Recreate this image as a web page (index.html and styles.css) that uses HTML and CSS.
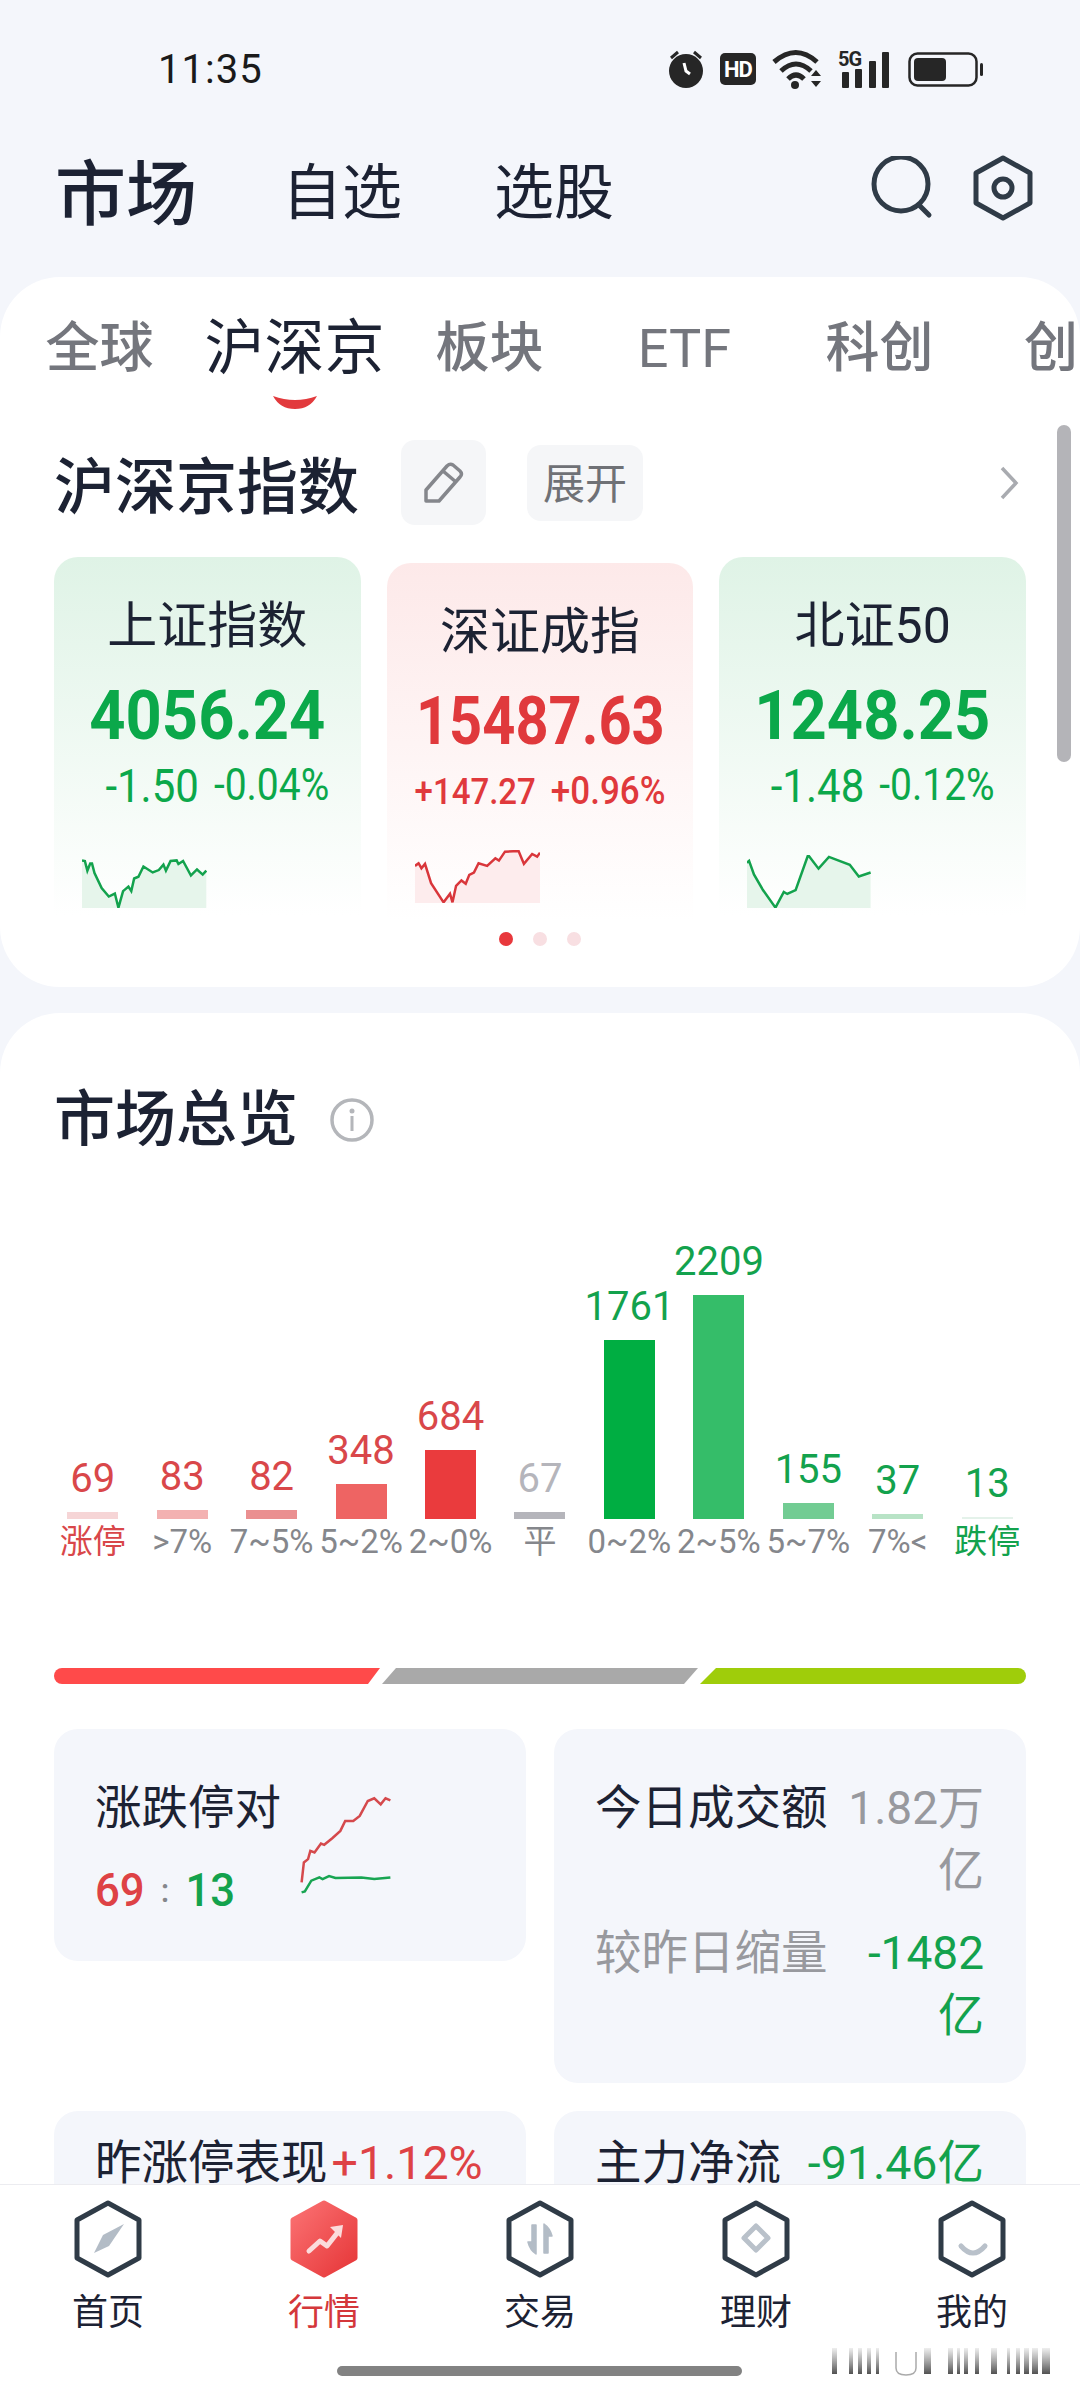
FILE: index.html
```html
<!DOCTYPE html>
<html lang="zh-CN">
<head>
    <meta charset="UTF-8">
    <meta name="viewport" content="width=device-width, initial-scale=1.0">
    <title>市场</title>
    <link rel="stylesheet" href="styles.css">
</head>
<body>
    <div class="phone">
        <div class="scroll">
            <div class="status-bar">
                <span class="time">11:35</span>
                <div class="status-icons">
                    <svg width="36" height="38" viewBox="0 0 36 38"><circle cx="18" cy="21" r="17" fill="#262626"/><path d="M3 8l7-6M33 8l-7-6" stroke="#262626" stroke-width="3"/><path d="M16 13l2 8 4 3" fill="none" stroke="#fff" stroke-width="3"/></svg>
                    <svg width="36" height="32" viewBox="0 0 36 32"><rect width="36" height="32" rx="5" fill="#262626"/><text x="18" y="24" class="status-text" text-anchor="middle" font-size="22" fill="#fff">HD</text></svg>
                    <svg width="50" height="40" viewBox="0 0 50 40"><path d="M2 13Q24-6 45 13M9 22Q24 8 39 22M16 30Q24 22 32 30" fill="none" stroke="#262626" stroke-width="5"/><circle cx="23" cy="36" r="4" fill="#262626"/><path d="M39 27l5-6 5 6zM39 32l5 6 5-6z" fill="#262626"/></svg>
                    <svg width="54" height="38" viewBox="0 0 54 38"><text x="0" y="16" class="status-text" font-size="20" fill="#262626">5G</text><rect x="4" y="22" width="7" height="16" rx="1" fill="#262626"/><rect x="17" y="19" width="7" height="19" rx="1" fill="#262626"/><rect x="31" y="11" width="7" height="27" rx="1" fill="#262626"/><rect x="44" y="2" width="7" height="36" rx="1" fill="#262626"/></svg>
                    <svg width="76" height="35" viewBox="0 0 76 35"><rect x="1.5" y="1.5" width="67" height="32" rx="8" fill="none" stroke="#262626" stroke-width="2.5"/><rect x="6" y="6" width="32" height="23" rx="4" fill="#262626"/><rect x="72" y="11" width="3" height="13" rx="1.5" fill="#262626"/></svg>
                </div>
            </div>

            <div class="header">
                <span class="header-title">市场</span>
                <span class="header-link link-first">自选</span>
                <span class="header-link link-second">选股</span>
                <div class="header-icons">
                    <svg width="64" height="64" viewBox="0 0 64 64"><circle cx="31" cy="28" r="27" fill="none" stroke="#2f3b47" stroke-width="5"/><path d="M49 49l10 10" stroke="#2f3b47" stroke-width="5" stroke-linecap="round"/></svg>
                    <svg width="60" height="66" viewBox="0 0 60 66"><path d="M30 3L57 18V48L30 63L3 48V18Z" fill="none" stroke="#2f3b47" stroke-width="5" stroke-linejoin="round"/><circle cx="30" cy="33" r="9" fill="none" stroke="#2f3b47" stroke-width="5"/></svg>
                </div>
            </div>

            <div class="panel panel-index">
                <div class="tabs">
                    <span class="tab">全球</span>
                    <span class="tab tab-active">沪深京
                        <svg class="tab-mark" width="46" height="14" viewBox="0 0 46 14"><path d="M1 1Q23 9 45 1Q38 14 23 14Q8 14 1 1Z" fill="#e23a3d"/></svg>
                    </span>
                    <span class="tab">板块</span>
                    <span class="tab tab-latin">ETF</span>
                    <span class="tab">科创</span>
                    <span class="tab tab-last">创</span>
                </div>

                <div class="index-head">
                    <span class="section-title">沪深京指数</span>
                    <span class="edit-btn">
                        <svg width="42" height="42" viewBox="0 0 42 42"><path d="M3 39V28L24 4Q27 1 30 3L37 9Q40 12 37 15L16 39ZM20 9L33 20" fill="none" stroke="#85878c" stroke-width="3.5" stroke-linejoin="round"/></svg>
                    </span>
                    <span class="expand-btn">展开</span>
                    <svg class="chevron" width="20" height="34" viewBox="0 0 20 34"><path d="M3 2L17 17L3 32" fill="none" stroke="#a9abb0" stroke-width="3.5"/></svg>
                </div>

                <div class="index-row">
                    <div class="index-card card-green">
                        <div class="index-name">上证指数</div>
                        <div class="index-price">4056.24</div>
                        <div class="index-change"><span class="change-big">-1.50</span><span>-0.04%</span></div>
                        <svg class="spark" viewBox="120 210 350 176" preserveAspectRatio="none"><polygon points="120,228 128,230 135,262 143,238 148,238 155,270 175,320 195,348 212,338 222,385 235,330 250,315 258,330 266,288 278,282 292,248 318,268 335,260 348,242 355,262 368,230 385,228 390,240 403,230 425,278 442,258 458,275 468,262 468,386 120,386" fill="#e6f5eb"/><polyline points="120,228 128,230 135,262 143,238 148,238 155,270 175,320 195,348 212,338 222,385 235,330 250,315 258,330 266,288 278,282 292,248 318,268 335,260 348,242 355,262 368,230 385,228 390,240 403,230 425,278 442,258 458,275 468,262" fill="none" stroke="#13a24d" stroke-width="2.5" vector-effect="non-scaling-stroke"/></svg>
                    </div>
                    <div class="index-card card-red">
                        <div class="index-name">深证成指</div>
                        <div class="index-price">15487.63</div>
                        <div class="index-change"><span>+147.27</span><span class="change-wide">+0.96%</span></div>
                        <svg class="spark spark-red" viewBox="1050 210 350 160" preserveAspectRatio="none"><polygon points="1050,258 1060,250 1068,265 1078,252 1095,310 1130,368 1148,342 1155,368 1165,318 1180,302 1192,312 1202,285 1215,278 1228,250 1252,258 1275,235 1285,242 1302,215 1340,213 1355,252 1378,222 1392,230 1400,218 1400,370 1050,370" fill="#fdeced"/><polyline points="1050,258 1060,250 1068,265 1078,252 1095,310 1130,368 1148,342 1155,368 1165,318 1180,302 1192,312 1202,285 1215,278 1228,250 1252,258 1275,235 1285,242 1302,215 1340,213 1355,252 1378,222 1392,230 1400,218" fill="none" stroke="#d9363b" stroke-width="2.5" vector-effect="non-scaling-stroke"/></svg>
                    </div>
                    <div class="index-card card-green">
                        <div class="index-name">北证50</div>
                        <div class="index-price">1248.25</div>
                        <div class="index-change"><span class="change-big">-1.48</span><span>-0.12%</span></div>
                        <svg class="spark" viewBox="1087 1140 180 136" preserveAspectRatio="none"><polygon points="1087,1160 1090,1155 1097,1190 1110,1230 1128,1275 1140,1235 1145,1240 1157,1230 1175,1140 1190,1175 1205,1145 1235,1165 1248,1195 1265,1185 1265,1276 1087,1276" fill="#e6f5eb"/><polyline points="1087,1160 1090,1155 1097,1190 1110,1230 1128,1275 1140,1235 1145,1240 1157,1230 1175,1140 1190,1175 1205,1145 1235,1165 1248,1195 1265,1185" fill="none" stroke="#13a24d" stroke-width="2.5" vector-effect="non-scaling-stroke"/></svg>
                    </div>
                </div>

                <div class="dots">
                    <span class="dot dot-on"></span>
                    <span class="dot"></span>
                    <span class="dot"></span>
                </div>
                <div class="scrollbar"></div>
            </div>

            <div class="panel panel-overview">
                <div class="overview-head">
                    <span class="section-title">市场总览</span>
                    <svg width="44" height="44" viewBox="0 0 44 44"><circle cx="22" cy="22" r="20" fill="none" stroke="#b4b6ba" stroke-width="3.5"/><circle cx="22" cy="13" r="2.5" fill="#b4b6ba"/><rect x="20.5" y="18" width="3" height="15" fill="#b4b6ba"/></svg>
                </div>

                <div class="histogram">
                    <div class="col up"><span class="val">69</span><i class="bar" style="height:7px;background:#f6d5d6"></i><span class="lbl lbl-up">涨停</span></div>
                    <div class="col up"><span class="val">83</span><i class="bar" style="height:9px;background:#f3b1b1"></i><span class="lbl">&gt;7%</span></div>
                    <div class="col up"><span class="val">82</span><i class="bar" style="height:9px;background:#ea8f90"></i><span class="lbl">7~5%</span></div>
                    <div class="col up"><span class="val">348</span><i class="bar" style="height:35px;background:#ee6463"></i><span class="lbl">5~2%</span></div>
                    <div class="col up"><span class="val">684</span><i class="bar" style="height:69px;background:#ea3b3d"></i><span class="lbl">2~0%</span></div>
                    <div class="col flat"><span class="val">67</span><i class="bar" style="height:7px;background:#b5b5bb"></i><span class="lbl">平</span></div>
                    <div class="col down"><span class="val">1761</span><i class="bar" style="height:179px;background:#00ae42"></i><span class="lbl">0~2%</span></div>
                    <div class="col down"><span class="val">2209</span><i class="bar" style="height:224px;background:#35bd69"></i><span class="lbl">2~5%</span></div>
                    <div class="col down"><span class="val">155</span><i class="bar" style="height:16px;background:#72cc93"></i><span class="lbl">5~7%</span></div>
                    <div class="col down"><span class="val">37</span><i class="bar" style="height:5px;background:#b8e3c6"></i><span class="lbl">7%&lt;</span></div>
                    <div class="col down"><span class="val">13</span><i class="bar" style="height:2px;background:#e4f2ea"></i><span class="lbl lbl-down">跌停</span></div>
                </div>

                <div class="tri-bar">
                    <span class="tri tri-red"></span>
                    <span class="tri tri-gray"></span>
                    <span class="tri tri-green"></span>
                </div>

                <div class="stats">
                    <div class="stat stat-ratio">
                        <div>
                            <div class="stat-title">涨跌停对</div>
                            <div class="ratio"><span class="red">69</span><span class="colon">:</span><span class="green">13</span></div>
                        </div>
                        <svg class="ratio-chart" width="92" height="98" viewBox="60 165 285 295" preserveAspectRatio="none"><polyline points="65,425 72,365 85,355 92,330 105,335 125,308 135,312 160,292 185,270 200,240 225,240 245,225 270,180 290,172 310,190 325,172 340,178" fill="none" stroke="#d5494c" stroke-width="2.5" vector-effect="non-scaling-stroke"/><polyline points="65,455 75,452 95,420 120,410 130,415 150,406 170,412 250,410 290,415 340,410" fill="none" stroke="#18a552" stroke-width="2.5" vector-effect="non-scaling-stroke"/></svg>
                    </div>
                    <div class="stat stat-volume">
                        <div class="stat-line">
                            <span class="stat-title">今日成交额</span>
                            <span class="stat-val muted">1.82万亿</span>
                        </div>
                        <div class="stat-line line-second">
                            <span class="stat-title muted">较昨日缩量</span>
                            <span class="stat-val green">-1482亿</span>
                        </div>
                    </div>
                    <div class="stat stat-cut">
                        <div class="stat-line line-tight">
                            <span class="stat-title">昨涨停表现</span>
                            <span class="stat-num red">+1.12%</span>
                        </div>
                    </div>
                    <div class="stat stat-cut">
                        <div class="stat-line">
                            <span class="stat-title">主力净流</span>
                            <span class="stat-num green">-91.46亿</span>
                        </div>
                    </div>
                </div>
            </div>
        </div>

        <div class="nav">
            <div class="nav-items">
                <div class="nav-item">
                    <svg width="70" height="78" viewBox="0 0 70 78"><path d="M35 3L66 20V58L35 75L4 58V20Z" fill="none" stroke="#2f3b47" stroke-width="5" stroke-linejoin="round"/><path d="M51 24L36 46L21 53L30 35Z" fill="#b3bcc6"/></svg>
                    <span>首页</span>
                </div>
                <div class="nav-item nav-active">
                    <svg width="70" height="78" viewBox="0 0 70 78"><defs><linearGradient id="navRed" x1="0" y1="0" x2="1" y2="1"><stop offset="0" stop-color="#fb7273"/><stop offset="1" stop-color="#e63638"/></linearGradient></defs><path d="M35 3L66 20V58L35 75L4 58V20Z" fill="url(#navRed)" stroke="url(#navRed)" stroke-width="5" stroke-linejoin="round"/><path d="M20 51L31 41L38 46L49 32" fill="none" stroke="#fbdcdc" stroke-width="5" stroke-linecap="round" stroke-linejoin="round"/><path d="M41 27L54 25L52 38Z" fill="#fbdcdc"/></svg>
                    <span>行情</span>
                </div>
                <div class="nav-item">
                    <svg width="70" height="78" viewBox="0 0 70 78"><path d="M35 3L66 20V58L35 75L4 58V20Z" fill="none" stroke="#2f3b47" stroke-width="5" stroke-linejoin="round"/><path d="M31 25V54Q25 50 23 42H27V25ZM39 53V24Q45 28 47 36H43V53Z" fill="#b3bcc6" stroke="#b3bcc6" stroke-width="1.5" stroke-linejoin="round"/></svg>
                    <span>交易</span>
                </div>
                <div class="nav-item">
                    <svg width="70" height="78" viewBox="0 0 70 78"><path d="M35 3L66 20V58L35 75L4 58V20Z" fill="none" stroke="#2f3b47" stroke-width="5" stroke-linejoin="round"/><path d="M35 26L47 38L35 50L23 38Z" fill="none" stroke="#b9c1ca" stroke-width="5" stroke-linejoin="round"/></svg>
                    <span>理财</span>
                </div>
                <div class="nav-item">
                    <svg width="70" height="78" viewBox="0 0 70 78"><path d="M35 3L66 20V58L35 75L4 58V20Z" fill="none" stroke="#2f3b47" stroke-width="5" stroke-linejoin="round"/><path d="M24 46Q36 60 48 46" fill="none" stroke="#b9c1ca" stroke-width="5" stroke-linecap="round"/></svg>
                    <span>我的</span>
                </div>
            </div>
            <div class="home-bar"></div>
            <svg class="watermark" width="222" height="30" viewBox="0 0 222 30">
                <defs><linearGradient id="smear" x1="0" y1="0" x2="0" y2="1"><stop offset="0" stop-color="#555" stop-opacity="0.1"/><stop offset="1" stop-color="#333" stop-opacity="0.85"/></linearGradient></defs>
                <g fill="url(#smear)">
                    <rect x="0" y="2" width="5" height="26"/><rect x="17" y="2" width="4" height="26"/><rect x="26" y="2" width="4" height="26"/><rect x="35" y="2" width="4" height="26"/><rect x="44" y="2" width="3" height="26"/>
                    <rect x="92" y="2" width="7" height="26"/><rect x="116" y="2" width="5" height="26"/><rect x="125" y="2" width="3" height="26"/><rect x="132" y="2" width="4" height="26"/><rect x="143" y="2" width="4" height="26"/>
                    <rect x="159" y="2" width="6" height="26"/><rect x="175" y="2" width="3" height="26"/><rect x="184" y="2" width="4" height="26"/><rect x="192" y="2" width="5" height="26"/><rect x="200" y="2" width="6" height="26"/><rect x="210" y="2" width="8" height="26"/>
                </g>
                <path d="M64 6V22Q64 29 74 29Q84 29 84 22V6" fill="none" stroke="#aaa" stroke-width="1.5"/>
            </svg>
        </div>
    </div>
</body>
</html>
```
FILE: styles.css
```css
* {
    box-sizing: border-box;
}
body {
    margin: 0;
    font-family: Roboto, "Noto Sans CJK SC", sans-serif;
    color: #1c2233;
}
.phone {
    position: relative;
    width: 1080px;
    height: 2400px;
    overflow: hidden;
    background-color: #f4f6fb;
}
.scroll {
    height: 2184px;
    overflow: hidden;
}
svg {
    display: block;
    flex-shrink: 0;
}

/* status bar + header */
.status-bar {
    display: flex;
    align-items: center;
    justify-content: space-between;
    height: 138px;
    padding: 0 96px 0 158px;
}
.time {
    font-size: 40px;
    color: #1a1a1a;
    letter-spacing: 1px;
}
.status-icons {
    display: flex;
    align-items: center;
    gap: 16px;
}
.status-text {
    font-family: Roboto, sans-serif;
    font-weight: 700;
    letter-spacing: -1px;
}
.header {
    display: flex;
    align-items: center;
    height: 139px;
    padding: 0 47px 40px 55px;
}
.header-title {
    font-size: 71px;
    font-weight: 500;
}
.header-link {
    font-size: 60px;
}
.link-first {
    margin-left: 85px;
}
.link-second {
    margin-left: 92px;
}
.header-icons {
    display: flex;
    align-items: center;
    gap: 39px;
    margin-left: auto;
}

/* white panels */
.panel {
    position: relative;
    background-color: white;
    border-radius: 60px;
}
.panel-index {
    height: 710px;
}
.panel-overview {
    margin-top: 26px;
    padding: 77px 54px 0;
    height: 1300px;
}
.tabs {
    display: flex;
    align-items: center;
    height: 135px;
    padding: 9px 0 0 2px;
    overflow: hidden;
    font-size: 54px;
    color: #74767d;
}
.tab {
    flex: 0 0 195px;
    line-height: 70px;
    text-align: center;
    font-weight: 500;
    white-space: nowrap;
}
.tab-active {
    position: relative;
    font-size: 60px;
    font-weight: 400;
    color: #1c2233;
}
.tab-mark {
    position: absolute;
    left: 75px;
    top: 81px;
}
.tab-latin {
    font-weight: 400;
}
.tab-last {
    flex-basis: 56px;
    margin-left: 47px;
    text-align: left;
}
.section-title {
    font-size: 61px;
    font-weight: 500;
    line-height: 60px;
}
.index-head {
    display: flex;
    align-items: center;
    height: 85px;
    margin: 28px 0 32px;
    padding: 0 61px 0 54px;
}
.index-head .section-title {
    padding-top: 10px;
}
.edit-btn {
    display: flex;
    align-items: center;
    justify-content: center;
    width: 85px;
    height: 85px;
    margin-left: 42px;
    border-radius: 14px;
    background-color: #f5f6f8;
}
.expand-btn {
    width: 116px;
    height: 76px;
    margin-left: 41px;
    border-radius: 14px;
    background-color: #f5f6f8;
    font-size: 42px;
    line-height: 80px;
    text-align: center;
    color: #6f7176;
}
.chevron {
    margin-left: auto;
}
.index-row {
    display: flex;
    align-items: flex-start;
    gap: 26px;
    padding: 0 54px;
}
.index-card {
    width: 307px;
    height: 358px;
    padding-top: 34px;
    border-radius: 24px 24px 0 0;
    text-align: center;
}
.card-green {
    background: linear-gradient(#dff3e6, #ffffff);
    color: #0ba84a;
}
.card-red {
    margin-top: 6px;
    background: linear-gradient(#fde9e9, #ffffff);
    color: #e0393c;
}
.index-name {
    font-size: 50px;
    line-height: 70px;
    color: #1c2233;
}
.index-price {
    margin-top: 15px;
    font-size: 68px;
    font-weight: 700;
    line-height: 80px;
    transform: scaleX(0.93);
}
.card-red .index-price {
    font-size: 66px;
    transform: scaleX(0.875);
}
.index-change {
    display: flex;
    align-items: center;
    justify-content: center;
    gap: 15px;
    height: 50px;
    margin-top: 4px;
    padding-left: 20px;
    font-size: 39px;
    transform: scaleY(1.12);
}
.card-red .index-change {
    padding-left: 0;
    font-size: 33px;
    font-weight: 500;
}
.card-red .change-wide {
    font-size: 35px;
}
.change-big {
    font-size: 42px;
}
.spark {
    width: 125px;
    height: 53px;
    margin: 45px 0 0 28px;
}
.spark-red {
    margin-top: 34px;
}
.dots {
    display: flex;
    justify-content: center;
    gap: 20px;
    margin-top: 11px;
}
.dot {
    width: 14px;
    height: 14px;
    border-radius: 50%;
    background-color: #f8dfe2;
}
.dot-on {
    background-color: #e8383c;
}
.scrollbar {
    position: absolute;
    top: 148px;
    right: 9px;
    width: 14px;
    height: 337px;
    border-radius: 7px;
    background-color: #b4b4b8;
}

/* market overview */
.overview-head {
    display: flex;
    align-items: center;
    gap: 32px;
}
.histogram {
    display: flex;
    align-items: flex-end;
    height: 415px;
    margin: 0 -6px;
}
.col {
    display: flex;
    flex: 1;
    flex-direction: column;
    align-items: center;
    min-width: 0;
}
.val {
    margin-bottom: 10px;
    font-size: 40px;
    line-height: 46px;
}
.bar {
    display: block;
    width: 51px;
}
.lbl {
    font-size: 33px;
    line-height: 46px;
    color: #85878c;
    white-space: nowrap;
}
.up .val, .lbl-up {
    color: #d9474a;
}
.down .val, .lbl-down {
    color: #13a24d;
}
.flat .val {
    color: #b5b5bb;
}
.tri-bar {
    display: flex;
    gap: 2px;
    height: 16px;
    margin-top: 103px;
}
.tri {
    display: block;
    height: 16px;
}
.tri-red {
    width: 326px;
    border-radius: 8px 0 0 8px;
    background-color: #ff4a4a;
    clip-path: polygon(0 0, 100% 0, 314px 100%, 0 100%);
}
.tri-gray {
    width: 316px;
    background-color: #a9a9a9;
    clip-path: polygon(14px 0, 100% 0, 302px 100%, 0 100%);
}
.tri-green {
    width: 326px;
    border-radius: 0 8px 8px 0;
    background-color: #9fcd0a;
    clip-path: polygon(16px 0, 100% 0, 100% 100%, 0 100%);
}
.stats {
    display: grid;
    grid-template-columns: 472px 472px;
    gap: 28px 28px;
    align-items: start;
    margin-top: 45px;
}
.stat {
    border-radius: 24px;
    background-color: #f4f6fb;
}
.stat-ratio {
    display: flex;
    align-items: flex-start;
    padding: 48px 40px 41px 41px;
}
.stat-volume {
    padding: 48px 42px 37px 41px;
}
.stat-cut {
    height: 200px;
    padding: 21px 42px 0 41px;
}
.stat-title {
    font-size: 46.5px;
    line-height: 62px;
    white-space: nowrap;
}
.ratio {
    display: flex;
    align-items: center;
    height: 60px;
    margin-top: 21px;
    font-size: 46px;
    font-weight: 500;
    transform-origin: left center;
    transform: scaleX(0.95);
}
.colon {
    margin: 0 17px;
    font-size: 34px;
    color: #85878c;
}
.ratio-chart {
    margin: 19px 0 0 19px;
}
.stat-line {
    display: flex;
    justify-content: space-between;
}
.line-second {
    margin-top: 21px;
}
.line-tight {
    justify-content: flex-start;
    gap: 4px;
}
.stat-val {
    width: 140px;
    font-size: 46px;
    line-height: 62px;
    text-align: right;
}
.stat-num {
    font-size: 46.5px;
    line-height: 62px;
    white-space: nowrap;
}
.muted {
    color: #98999e;
}
.red {
    color: #de4245;
}
.green {
    color: #13a24d;
}

/* bottom nav */
.nav {
    position: relative;
    height: 216px;
    border-top: 1px solid #ececf0;
    background-color: white;
}
.nav-items {
    display: flex;
    padding-top: 15px;
}
.nav-item {
    display: flex;
    flex: 0 0 216px;
    flex-direction: column;
    align-items: center;
    gap: 10px;
    font-size: 36px;
    line-height: 50px;
    color: #1c2233;
}
.nav-active {
    color: #d4373b;
}
.home-bar {
    width: 405px;
    height: 10px;
    margin: 28px 0 0 337px;
    border-radius: 5px;
    background-color: #828282;
}
.watermark {
    position: absolute;
    top: 161px;
    left: 832px;
}
```
